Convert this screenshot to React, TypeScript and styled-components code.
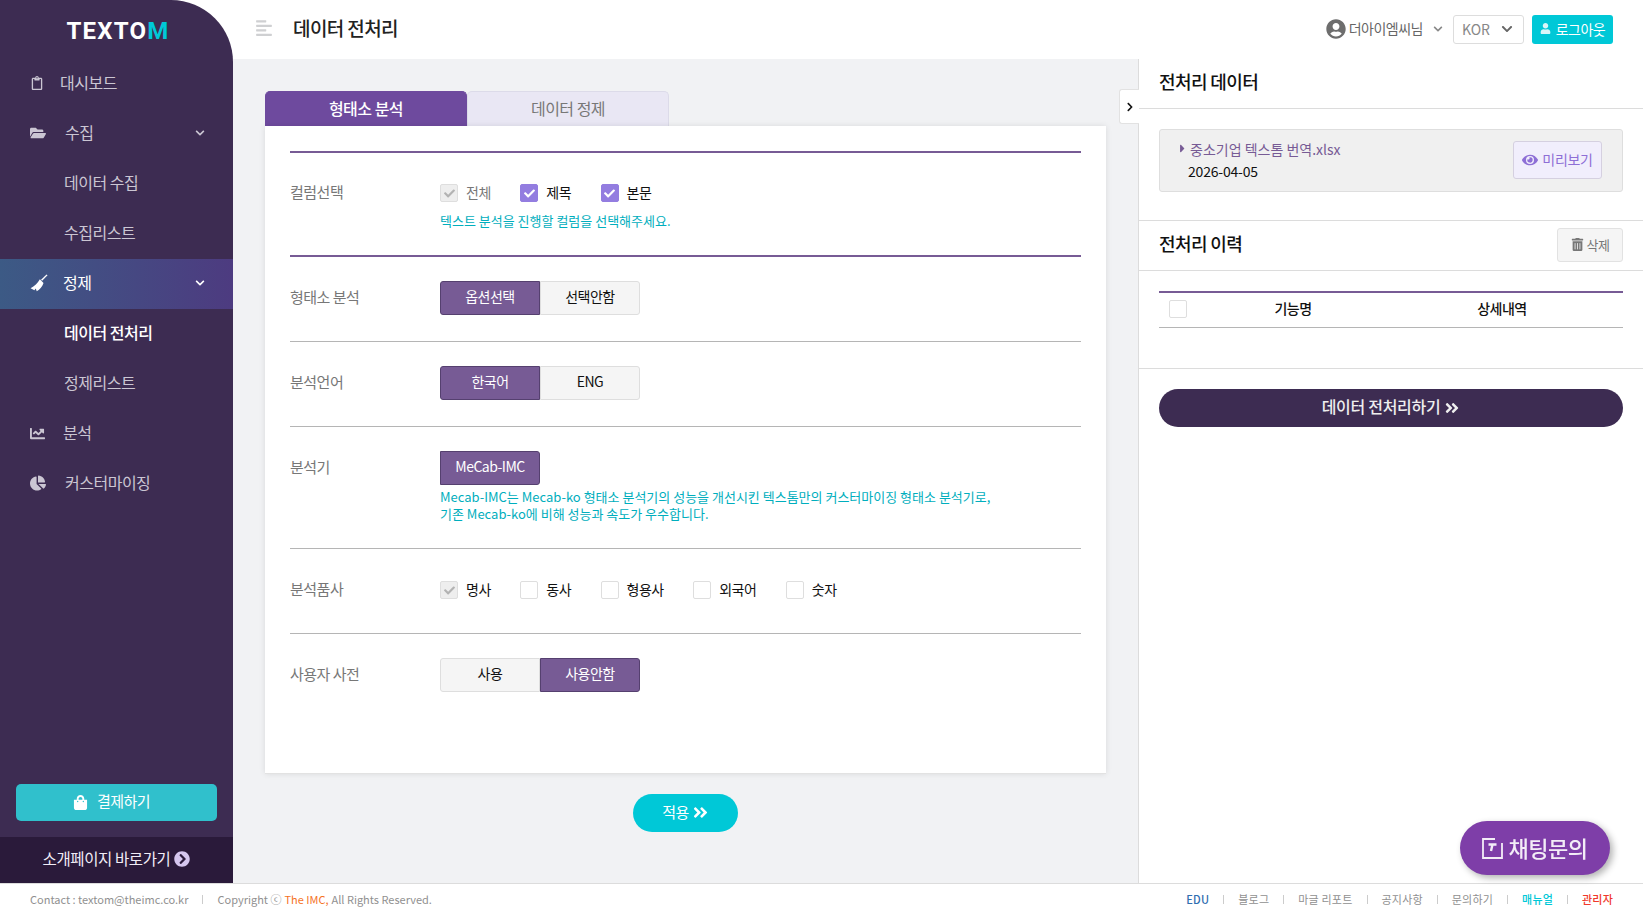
import { memo, ReactNode } from "react";
import styled, { createGlobalStyle } from "styled-components";
import {
  FaAlignLeft,
  FaAngleDoubleRight,
  FaCaretRight,
  FaChartLine,
  FaChartPie,
  FaCheck,
  FaChevronCircleRight,
  FaChevronDown,
  FaChevronRight,
  FaEye,
  FaFolderOpen,
  FaRegClipboard,
  FaShoppingBag,
  FaTrashAlt,
  FaUser,
  FaUserCircle,
} from "react-icons/fa";

const FONT = `"Noto Sans CJK KR", "Noto Sans", sans-serif`;
const COLOR_SIDEBAR = "#3d2c52";
const COLOR_PURPLE = "#775b95";
const COLOR_CYAN = "#00c8d7";
const COLOR_TEAL = "#00aebd";

const GlobalStyle = createGlobalStyle`
  * { box-sizing: border-box; }
  html, body { margin: 0; padding: 0; height: 100%; background: #fff; }
  body { font-family: ${FONT}; font-size: 14px; color: #000; letter-spacing: -0.5px; overflow: hidden; }
  #root { height: 100%; }
`;

const Page = styled.div`
  display: flex;
  flex-flow: column;
  height: 918px;
`;

const Main = styled.div`
  flex: 1 1 auto;
  display: flex;
  min-height: 0;
`;

const Sidebar = styled.aside`
  flex: 0 0 233px;
  display: flex;
  flex-flow: column;
  background: ${COLOR_SIDEBAR};
  border-top-right-radius: 62px;
`;

const Logo = styled.div`
  height: 59px;
  display: flex;
  align-items: center;
  justify-content: center;
  padding: 3px 0 0 3px;
  font-family: "Roboto", sans-serif;
  font-size: 24px;
  font-weight: 700;
  letter-spacing: 1.2px;
  color: #fff;
  span { color: ${COLOR_CYAN}; }
`;

const Menu = styled.nav`
  flex: 1 1 auto;
  display: flex;
  flex-flow: column;
`;

const MenuItem = styled.div<{ $active?: boolean; $textLeft: number }>`
  height: 50px;
  display: grid;
  grid-template-columns: ${(p) => p.$textLeft - 30}px 1fr;
  align-items: center;
  position: relative;
  padding: 0 0 4px 30px;
  font-size: 16px;
  color: ${(p) => (p.$active ? "#fff" : "#cbc6d3")};
  background: ${(p) => (p.$active ? "linear-gradient(90deg, #3c5a85, #4d3b80)" : "none")};
  svg { margin-top: 2px; }
`;

const MenuChevron = styled(FaChevronDown)`
  position: absolute;
  right: 28px;
  top: 17px;
  font-size: 10px;
`;

const SubItem = styled.div<{ $active?: boolean }>`
  height: 50px;
  display: flex;
  align-items: center;
  padding: 0 0 4px 64px;
  font-size: 16px;
  font-weight: ${(p) => (p.$active ? 500 : 400)};
  color: ${(p) => (p.$active ? "#fff" : "#cbc6d3")};
`;

const PayButton = styled.button`
  margin: 0 16px 16px;
  height: 37px;
  display: flex;
  align-items: center;
  justify-content: center;
  gap: 9px;
  padding: 0 10px 5px 0;
  border: 0;
  border-radius: 5px;
  background: #30c0cc;
  color: #fff;
  font: inherit;
  font-size: 15px;
  letter-spacing: -0.5px;
  svg { margin-top: 4px; }
`;

const IntroLink = styled.div`
  height: 46px;
  display: flex;
  align-items: center;
  justify-content: center;
  gap: 4px;
  padding-bottom: 5px;
  background: #2a1a3a;
  color: #f1edf7;
  font-size: 15.5px;
  letter-spacing: -0.4px;
  svg { color: #d5c6ee; font-size: 16px; margin-top: 3px; }
`;

const Workspace = styled.div`
  flex: 1 1 auto;
  display: flex;
  flex-flow: column;
  min-width: 0;
`;

const Header = styled.header`
  flex: 0 0 59px;
  display: flex;
  align-items: center;
  padding: 0 30px 0 22px;
  background: #fff;
`;

const MenuToggle = styled(FaAlignLeft)`
  font-size: 18px;
  color: #cfd0d2;
  margin: -4px 0 0;
`;

const PageTitle = styled.h1`
  margin: -5px 0 0 20px;
  font-size: 19px;
  font-weight: 500;
  color: #222;
  letter-spacing: -0.6px;
`;

const HeaderRight = styled.div`
  margin-left: auto;
  display: flex;
  align-items: center;
  margin-top: -1px;
`;

const UserName = styled.div`
  display: flex;
  align-items: center;
  gap: 3px;
  color: #666;
  font-size: 14px;
  margin-right: 10px;
  padding-bottom: 2px;
  > svg:first-child { font-size: 20px; color: #6d6d6d; margin-top: 1px; }
`;

const SmallChevron = styled(FaChevronDown)`
  font-size: 10px;
  color: #888;
  margin: 2px 0 0 7px;
`;

const LangSelect = styled.div`
  width: 71px;
  height: 29px;
  display: flex;
  align-items: center;
  justify-content: space-between;
  padding: 0 10px 0 8px;
  border: 1px solid #ddd;
  border-radius: 3px;
  color: #888;
  font-size: 14px;
  letter-spacing: 0;
  svg { font-size: 12px; color: #666; }
`;

const LogoutButton = styled.button`
  margin-left: 8px;
  width: 81px;
  height: 29px;
  display: flex;
  align-items: center;
  justify-content: center;
  gap: 5px;
  padding: 0 0 1px;
  border: 0;
  border-radius: 3px;
  background: ${COLOR_CYAN};
  color: #fff;
  font: inherit;
  font-size: 14px;
  letter-spacing: -0.5px;
  svg { font-size: 11px; opacity: 0.85; }
`;

const Body = styled.div`
  flex: 1 1 auto;
  display: flex;
  min-height: 0;
`;

const Content = styled.main`
  flex: 1 1 auto;
  display: flex;
  flex-flow: column;
  padding: 32px 32px 0 32px;
  background: #f1f2f4;
`;

const Tabs = styled.div`
  display: flex;
  height: 35px;
`;

const Tab = styled.div<{ $active?: boolean }>`
  width: 202px;
  display: flex;
  align-items: center;
  justify-content: center;
  padding-bottom: 3px;
  border-radius: 5px 5px 0 0;
  font-size: 16px;
  font-weight: ${(p) => (p.$active ? 500 : 400)};
  color: ${(p) => (p.$active ? "#fff" : "#777")};
  background: ${(p) => (p.$active ? "#6e4a9e" : "#e9e7f4")};
  border: 1px solid ${(p) => (p.$active ? "#6e4a9e" : "#dcdbe9")};
  border-bottom: 0;
`;

const Card = styled.section`
  height: 648px;
  padding: 25px 25px 0;
  background: #fff;
  box-shadow: 0 0 6px rgba(0, 0, 0, 0.1);
  border-bottom: 1px solid #e2e2e2;
`;

const Row = styled.div<{ $strong?: boolean; $height: number; $top?: number }>`
  display: grid;
  grid-template-columns: 150px 1fr;
  height: ${(p) => p.$height}px;
  padding-top: ${(p) => p.$top ?? 24}px;
  border-top: ${(p) => (p.$strong ? `2px solid ${COLOR_PURPLE}` : "1px solid #b5b5b5")};
`;

const RowLabel = styled.div`
  height: 34px;
  line-height: 32px;
  font-size: 15px;
  color: #777;
`;

const ButtonGroup = styled.div`
  display: flex;
`;

const ToggleButton = styled.div<{ $on?: boolean }>`
  width: 100px;
  height: 34px;
  display: flex;
  align-items: center;
  justify-content: center;
  padding-bottom: 4px;
  font-size: 14px;
  color: ${(p) => (p.$on ? "#fff" : "#111")};
  background: ${(p) => (p.$on ? COLOR_PURPLE : "#f5f5f5")};
  border: 1px solid ${(p) => (p.$on ? "#55406f" : "#dedede")};
  &:first-child { border-radius: 3px 0 0 3px; }
  &:last-child { border-radius: 0 3px 3px 0; }
`;

const CheckRow = styled.div`
  display: flex;
  align-items: center;
  height: 33px;
  padding-bottom: 1px;
  gap: 29.5px;
`;

const CheckLabel = styled.label<{ $muted?: boolean }>`
  display: flex;
  align-items: center;
  gap: 8px;
  font-size: 14px;
  color: ${(p) => (p.$muted ? "#777" : "#111")};
`;

const CheckBoxMark = styled.span<{ $state: "on" | "locked" | "off" }>`
  width: 18px;
  height: 18px;
  margin-top: 2px;
  display: flex;
  align-items: center;
  justify-content: center;
  border-radius: 2px;
  font-size: 11px;
  color: ${(p) => (p.$state === "on" ? "#fff" : "#b3b3b3")};
  background: ${(p) => (p.$state === "on" ? "#937de0" : p.$state === "locked" ? "#eeeeee" : "#fff")};
  border: 1px solid ${(p) => (p.$state === "on" ? "#937de0" : "#dedede")};
`;

const HelpText = styled.p`
  margin: 3px 0 0;
  font-size: 13px;
  line-height: 17px;
  letter-spacing: 0;
  color: ${COLOR_TEAL};
`;

const ApplyButton = styled.button`
  align-self: center;
  margin-top: 20px;
  width: 105px;
  height: 38px;
  display: flex;
  align-items: center;
  justify-content: center;
  gap: 3px;
  padding: 0 0 3px;
  border: 0;
  border-radius: 19px;
  background: ${COLOR_CYAN};
  color: #fff;
  font: inherit;
  font-size: 15px;
  letter-spacing: -0.5px;
  svg { font-size: 17px; margin-top: 2px; }
`;

const SidePanel = styled.aside`
  flex: 0 0 505px;
  position: relative;
  background: #fff;
  border-left: 1px solid #dcdcdc;
`;

const CollapseTab = styled.div`
  position: absolute;
  left: -20px;
  top: 30px;
  width: 20px;
  height: 35px;
  display: flex;
  align-items: center;
  justify-content: center;
  background: #fff;
  border: 1px solid #e2e2e2;
  border-right: 0;
  border-radius: 3px 0 0 3px;
  font-size: 10px;
  color: #111;
`;

const PanelHead = styled.div<{ $height: number }>`
  height: ${(p) => p.$height}px;
  display: flex;
  align-items: center;
  justify-content: space-between;
  padding: 0 20px 0 20px;
  border-bottom: 1px solid #dcdcdc;
`;

const PanelTitle = styled.h2`
  margin: -6px 0 0;
  font-size: 18px;
  font-weight: 500;
  color: #111;
  letter-spacing: -0.6px;
`;

const FileSection = styled.div`
  height: 112px;
  padding: 20px 20px 0;
  border-bottom: 1px solid #dcdcdc;
`;

const FileBox = styled.div`
  height: 63px;
  display: flex;
  align-items: center;
  justify-content: space-between;
  padding: 0 20px 2px 20px;
  background: #f0f0f0;
  border: 1px solid #dedede;
  border-radius: 3px;
`;

const FileName = styled.div`
  display: flex;
  align-items: center;
  gap: 1px;
  font-size: 14px;
  letter-spacing: 0;
  color: ${COLOR_PURPLE};
  svg { font-size: 13px; margin-left: -4px; }
`;

const FileDate = styled.div`
  margin: 2px 0 0 8px;
  font-size: 14px;
  letter-spacing: -0.2px;
  color: #111;
`;

const PreviewButton = styled.div`
  width: 89px;
  height: 38px;
  display: flex;
  align-items: center;
  justify-content: center;
  gap: 4px;
  padding-bottom: 1px;
  background: #f1eefc;
  border: 1px solid #d5d0e0;
  border-radius: 3px;
  font-size: 14px;
  letter-spacing: -0.3px;
  color: #8e6fd6;
  svg { font-size: 16px; margin-top: 1px; }
`;

const DeleteButton = styled.div`
  width: 66px;
  height: 34px;
  margin-top: -2px;
  display: flex;
  align-items: center;
  justify-content: center;
  gap: 3px;
  padding-bottom: 1px;
  background: #f5f5f5;
  border: 1px solid #e2e2e2;
  border-radius: 3px;
  font-size: 13px;
  color: #777;
`;

const TableSection = styled.div`
  height: 98px;
  padding: 20px 20px 0;
  border-bottom: 1px solid #dcdcdc;
`;

const TableHead = styled.div`
  height: 37px;
  display: grid;
  grid-template-columns: 30px 188px 230px;
  align-items: center;
  border-top: 2px solid ${COLOR_PURPLE};
  border-bottom: 1px solid #b5b5b5;
  padding: 0 0 4px 10px;
  font-size: 14px;
  font-weight: 500;
  color: #111;
  > div { text-align: center; }
`;

const ActionSection = styled.div`
  padding: 20px 20px;
`;

const ActionButton = styled.button`
  width: 100%;
  height: 38px;
  display: flex;
  align-items: center;
  justify-content: center;
  gap: 4px;
  padding: 0 0 5px;
  border: 0;
  border-radius: 19px;
  background: ${COLOR_SIDEBAR};
  color: #eee;
  font: inherit;
  font-size: 16px;
  font-weight: 500;
  letter-spacing: -0.3px;
  svg { font-size: 16px; margin-top: 4px; }
`;

const ChatButton = styled.div`
  position: fixed;
  left: 1460px;
  top: 821px;
  width: 150px;
  height: 54px;
  display: flex;
  align-items: center;
  justify-content: center;
  gap: 5px;
  padding: 0 2px 2px 0;
  border-radius: 27px;
  background: #7e3ea8;
  box-shadow: 3px 3px 7px rgba(0, 0, 0, 0.3);
  color: #f3edf7;
  font-size: 22px;
  font-weight: 500;
  svg { margin-top: 2px; }
`;

const Footer = styled.footer`
  flex: 0 0 35px;
  display: flex;
  align-items: center;
  justify-content: space-between;
  padding: 0 30px 4px 30px;
  border-top: 1px solid #dcdcdc;
  font-size: 11px;
  color: #909090;
`;

const FooterSide = styled.div<{ $spacing: number }>`
  display: flex;
  align-items: center;
  letter-spacing: ${(p) => p.$spacing}px;
`;

const FooterDivider = styled.span`
  width: 1px;
  height: 9px;
  background: #ccc;
  margin: 0 14px;
`;

const Orange = styled.span`
  color: #f5731f;
  margin: 0 3px;
`;

const FooterLink = styled.span<{ $color?: string; $bold?: boolean }>`
  color: ${(p) => p.$color ?? "#909090"};
  font-weight: ${(p) => (p.$bold ? 500 : 400)};
`;

const ChatIcon = () => (
  <svg width="23" height="23" viewBox="0 0 23 23" fill="none" stroke="currentColor" strokeWidth="1.8">
    <path d="M14 2H2v19h19V6" />
    <path d="M7.500 7.500h8M11.500 7.500 10 14" strokeWidth="2.4" />
  </svg>
);

const BroomIcon = () => (
  <svg width="18" height="18" viewBox="0 0 16 16" fill="currentColor">
    <path d="M15.600 1.100 10.800 6l-1-1 4.900-4.600z" />
    <path d="M8.800 4.600 12 8c-.9 3-3.200 5.600-6 7.400l-.9-2.600-1.200 1.700L.5 12.600C4 11 6.800 8 8.800 4.600z" />
  </svg>
);

const Check = ({ label, state, muted }: { label: string; state: "on" | "locked" | "off"; muted?: boolean }) => (
  <CheckLabel $muted={muted}>
    <CheckBoxMark $state={state}>{state !== "off" && <FaCheck />}</CheckBoxMark>
    {label}
  </CheckLabel>
);

const FormRow = ({
  label,
  height,
  strong,
  top,
  children,
}: {
  label: string;
  height: number;
  strong?: boolean;
  top?: number;
  children: ReactNode;
}) => (
  <Row $height={height} $strong={strong} $top={top}>
    <RowLabel>{label}</RowLabel>
    <div>{children}</div>
  </Row>
);

const FOOTER_LINKS = [
  { text: "블로그" },
  { text: "마글 리포트" },
  { text: "공지사항" },
  { text: "문의하기" },
  { text: "매뉴얼", color: COLOR_CYAN, bold: true },
  { text: "관리자", color: "#f0392b", bold: true },
];

const App = memo(() => (
  <Page>
    <GlobalStyle />
    <Main>
      <Sidebar>
        <Logo>
          <div>
            TEXTO<span>M</span>
          </div>
        </Logo>
        <Menu>
          <MenuItem $textLeft={60}>
            <FaRegClipboard size={14} />
            <span>대시보드</span>
          </MenuItem>
          <MenuItem $textLeft={65}>
            <FaFolderOpen size={16} />
            <span>수집</span>
            <MenuChevron />
          </MenuItem>
          <SubItem>데이터 수집</SubItem>
          <SubItem>수집리스트</SubItem>
          <MenuItem $active $textLeft={63}>
            <BroomIcon />
            <span>정제</span>
            <MenuChevron />
          </MenuItem>
          <SubItem $active>데이터 전처리</SubItem>
          <SubItem>정제리스트</SubItem>
          <MenuItem $textLeft={63}>
            <FaChartLine size={15} />
            <span>분석</span>
          </MenuItem>
          <MenuItem $textLeft={65}>
            <FaChartPie size={16} />
            <span>커스터마이징</span>
          </MenuItem>
        </Menu>
        <PayButton>
          <FaShoppingBag size={15} />
          결제하기
        </PayButton>
        <IntroLink>
          소개페이지 바로가기
          <FaChevronCircleRight />
        </IntroLink>
      </Sidebar>
      <Workspace>
        <Header>
          <MenuToggle />
          <PageTitle>데이터 전처리</PageTitle>
          <HeaderRight>
            <UserName>
              <FaUserCircle />
              더아이엠씨님
              <SmallChevron />
            </UserName>
            <LangSelect>
              KOR
              <FaChevronDown />
            </LangSelect>
            <LogoutButton>
              <FaUser />
              로그아웃
            </LogoutButton>
          </HeaderRight>
        </Header>
        <Body>
          <Content>
            <Tabs>
              <Tab $active>형태소 분석</Tab>
              <Tab>데이터 정제</Tab>
            </Tabs>
            <Card>
              <FormRow label="컬럼선택" height={104} strong top={23}>
                <CheckRow>
                  <Check label="전체" state="locked" muted />
                  <Check label="제목" state="on" />
                  <Check label="본문" state="on" />
                </CheckRow>
                <HelpText>텍스트 분석을 진행할 컬럼을 선택해주세요.</HelpText>
              </FormRow>
              <FormRow label="형태소 분석" height={86} strong>
                <ButtonGroup>
                  <ToggleButton $on>옵션선택</ToggleButton>
                  <ToggleButton>선택안함</ToggleButton>
                </ButtonGroup>
              </FormRow>
              <FormRow label="분석언어" height={85}>
                <ButtonGroup>
                  <ToggleButton $on>한국어</ToggleButton>
                  <ToggleButton>ENG</ToggleButton>
                </ButtonGroup>
              </FormRow>
              <FormRow label="분석기" height={122}>
                <ButtonGroup>
                  <ToggleButton $on>MeCab-IMC</ToggleButton>
                </ButtonGroup>
                <HelpText>
                  Mecab-IMC는 Mecab-ko 형태소 분석기의 성능을 개선시킨 텍스톰만의 커스터마이징 형태소 분석기로,
                  <br />
                  기존 Mecab-ko에 비해 성능과 속도가 우수합니다.
                </HelpText>
              </FormRow>
              <FormRow label="분석품사" height={85}>
                <CheckRow>
                  <Check label="명사" state="locked" />
                  <Check label="동사" state="off" />
                  <Check label="형용사" state="off" />
                  <Check label="외국어" state="off" />
                  <Check label="숫자" state="off" />
                </CheckRow>
              </FormRow>
              <FormRow label="사용자 사전" height={85}>
                <ButtonGroup>
                  <ToggleButton>사용</ToggleButton>
                  <ToggleButton $on>사용안함</ToggleButton>
                </ButtonGroup>
              </FormRow>
            </Card>
            <ApplyButton>
              적용
              <FaAngleDoubleRight />
            </ApplyButton>
          </Content>
          <SidePanel>
            <CollapseTab>
              <FaChevronRight />
            </CollapseTab>
            <PanelHead $height={50}>
              <PanelTitle>전처리 데이터</PanelTitle>
            </PanelHead>
            <FileSection>
              <FileBox>
                <div>
                  <FileName>
                    <FaCaretRight />
                    중소기업 텍스톰 번역.xlsx
                  </FileName>
                  <FileDate>2026-04-05</FileDate>
                </div>
                <PreviewButton>
                  <FaEye />
                  미리보기
                </PreviewButton>
              </FileBox>
            </FileSection>
            <PanelHead $height={50}>
              <PanelTitle>전처리 이력</PanelTitle>
              <DeleteButton>
                <FaTrashAlt size={13} />
                삭제
              </DeleteButton>
            </PanelHead>
            <TableSection>
              <TableHead>
                <CheckBoxMark $state="off" />
                <div>기능명</div>
                <div>상세내역</div>
              </TableHead>
            </TableSection>
            <ActionSection>
              <ActionButton>
                데이터 전처리하기
                <FaAngleDoubleRight />
              </ActionButton>
            </ActionSection>
          </SidePanel>
        </Body>
      </Workspace>
    </Main>
    <Footer>
      <FooterSide $spacing={0}>
        Contact : textom@theimc.co.kr
        <FooterDivider />
        Copyright ⓒ<Orange>The IMC,</Orange>All Rights Reserved.
      </FooterSide>
      <FooterSide $spacing={0.2}>
        <FooterLink $color="#2f6db0" $bold>
          EDU
        </FooterLink>
        {FOOTER_LINKS.map((link) => (
          <span key={link.text} style={{ display: "contents" }}>
            <FooterDivider />
            <FooterLink $color={link.color} $bold={link.bold}>
              {link.text}
            </FooterLink>
          </span>
        ))}
      </FooterSide>
    </Footer>
    <ChatButton>
      <ChatIcon />
      채팅문의
    </ChatButton>
  </Page>
));

export default App;
